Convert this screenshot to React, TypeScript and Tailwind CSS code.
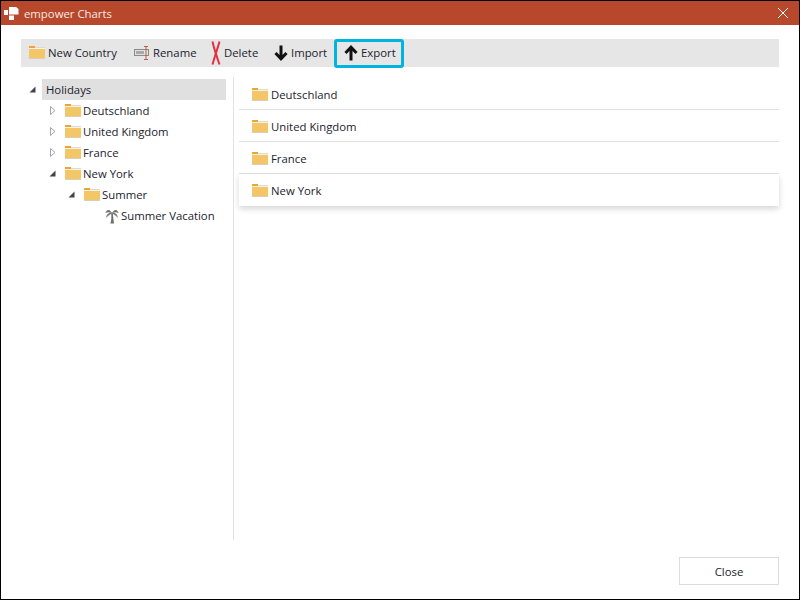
import React from 'react';

const FONT = "font-['Open_Sans','Liberation_Sans',sans-serif]";

const Folder = () => (
  <svg width="16" height="13" viewBox="0 0 16 13" className="shrink-0">
    <rect x="0" y="0" width="6" height="2" fill="#eda33a" />
    <rect x="6" y="1" width="10" height="1" fill="#dcdad4" />
    <rect x="0" y="2" width="16" height="1" fill="#fbf3e0" />
    <rect x="0" y="3" width="16" height="10" fill="#f3c768" />
    <rect x="0" y="12" width="16" height="1" fill="#d9cfb4" />
  </svg>
);

const Rename = () => (
  <svg width="17" height="14" viewBox="0 0 17 14" className="shrink-0">
    <rect x="0.5" y="3.5" width="14" height="6" fill="#e2e2e2" stroke="#8a8a8a" />
    <rect x="2" y="5" width="8" height="3" fill="#a8a8a8" />
    <path d="M10 0.5 H14 M12 0.5 V13.5 M10 13.5 H14" stroke="#b5604a" strokeWidth="1" fill="none" />
  </svg>
);

const RedX = () => (
  <svg width="10" height="24" viewBox="0 0 10 24" className="shrink-0">
    <path d="M1.5 0.5 C3 8 6 16 8.5 23.5" stroke="#e5303c" strokeWidth="2" fill="none" />
    <path d="M8.5 0.5 C6.5 8 3.5 16 1.5 23.5" stroke="#e5303c" strokeWidth="2" fill="none" />
  </svg>
);

const Arrow = ({ up }: { up?: boolean }) => (
  <svg width="14" height="16" viewBox="0 0 14 16" className="shrink-0">
    <path
      d={up ? 'M7 15.5 V2.5 M1.5 8 L7 2.2 L12.5 8' : 'M7 0.5 V13.5 M1.5 8 L7 13.8 L12.5 8'}
      stroke="#111"
      strokeWidth="3"
      fill="none"
    />
  </svg>
);

const Palm = () => (
  <svg width="14" height="16" viewBox="0 0 14 16" className="shrink-0">
    <path d="M6.2 5 C6.6 9 6.4 12 5.4 15.5 H9 C8.6 12 8 8 7.8 5 Z" fill="#6f6f6f" />
    <path d="M7 5.5 C5 0.5 2 1 0.3 5 C3 3.6 5 4 7 5.5 Z M7 5.5 C9 0.5 12 1 13.7 5 C11 3.6 9 4 7 5.5 Z" fill="#6f6f6f" />
    <path d="M7 4.5 C3.5 4 1.5 6.5 1 10 C3 7.5 5 6.5 7 5.5 Z M7 4.5 C10.5 4 12.5 6.5 13 10 C11 7.5 9 6.5 7 5.5 Z" fill="#7d7d7d" />
  </svg>
);

const Caret = ({ open }: { open: boolean }) =>
  open ? (
    <svg width="7" height="7" viewBox="0 0 7 7" className="shrink-0">
      <path d="M6.5 0.5 V6.5 H0.5 Z" fill="#444" />
    </svg>
  ) : (
    <svg width="6" height="9" viewBox="0 0 6 9" className="shrink-0">
      <path d="M0.5 0.5 L5 4.5 L0.5 8.5 Z" fill="#fff" stroke="#a6a6a6" />
    </svg>
  );

const treeRows = [
  { label: 'Deutschland', pad: 'pl-[29px]', caretW: 'w-[15px]', open: false },
  { label: 'United Kingdom', pad: 'pl-[29px]', caretW: 'w-[15px]', open: false },
  { label: 'France', pad: 'pl-[29px]', caretW: 'w-[15px]', open: false },
  { label: 'New York', pad: 'pl-[28px]', caretW: 'w-[16px]', open: true },
  { label: 'Summer', pad: 'pl-[47px]', caretW: 'w-[16px]', open: true },
];

const listRows = ['Deutschland', 'United Kingdom', 'France'];

export default function App() {
  return (
    <div className={`w-[800px] h-[600px] bg-white border border-black flex flex-col text-[11.35px] text-[#1c1c2e] ${FONT}`}>
      <div className="h-6 bg-[#b7482b] flex items-center text-white shrink-0">
        <svg width="16" height="16" viewBox="0 0 16 16" className="ml-[3px] shrink-0">
          <path d="M5 2 H12 L14.5 4 V9.5 H5 Z" fill="#fff" />
          <rect x="0" y="5" width="4" height="5" fill="#fff" />
          <rect x="5" y="10.5" width="5" height="4.5" fill="#fff" />
        </svg>
        <span className="ml-1 pt-[2px] text-[#f8e9e4]">empower Charts</span>
        <svg width="12" height="12" viewBox="0 0 12 12" className="ml-auto mr-[10px]">
          <path d="M1 1 L11 11 M11 1 L1 11" stroke="#fff" strokeWidth="1" />
        </svg>
      </div>

      <div className="flex-1 flex flex-col pt-[14px] px-5 pb-[14px] min-h-0">
        <div className="h-7 bg-[#e6e6e6] flex items-center shrink-0 pl-2">
          <div className="flex items-center gap-[3px]"><Folder /><span className="w-[70px]">New Country</span></div>
          <div className="flex items-center gap-[2px] ml-[16px]"><Rename /><span className="w-[43px]">Rename</span></div>
          <div className="flex items-center gap-[3px] ml-[15px]"><RedX /><span className="w-[33px]">Delete</span></div>
          <div className="flex items-center gap-[3px] ml-[17px]"><Arrow /><span className="w-[36px]">Import</span></div>
          <div className="flex items-center gap-[3px] ml-[7px] w-[70px] h-[29px] pl-[7px] border-[3px] border-[#00b4e0] rounded-[3px]"><Arrow up /><span>Export</span></div>
        </div>

        <div className="flex mt-[10px] h-[463px] shrink-0">
          <div className="w-[213px] border-r border-[#e2e2e2] shrink-0 pt-[2px]">
            <div className="flex items-center h-[21px]">
              <div className="w-[21px] pl-[8px] shrink-0"><Caret open /></div>
              <div className="w-[184px] h-[21px] bg-[#e0e0e0] flex items-center pl-1 pt-px">Holidays</div>
            </div>
            {treeRows.map(r => (
              <div key={r.label} className={`flex items-center h-[21px] ${r.pad}`}>
                <div className={`${r.caretW} shrink-0`}><Caret open={r.open} /></div>
                <Folder />
                <span className="ml-[2px]">{r.label}</span>
              </div>
            ))}
            <div className="flex items-center h-[21px] pl-[84px] gap-[2px]">
              <Palm />
              <span>Summer Vacation</span>
            </div>
          </div>

          <div className="flex-1 pl-[5px] pt-px">
            {listRows.map(l => (
              <div key={l} className="h-8 border-b border-[#e2e2e2] flex items-center pl-[13px] pt-[2px] gap-[3px]">
                <Folder />
                <span>{l}</span>
              </div>
            ))}
            <div className="h-8 flex items-center pl-[13px] pt-px gap-[3px] shadow-[0_3px_6px_rgba(0,0,0,0.16)]">
              <Folder />
              <span>New York</span>
            </div>
          </div>
        </div>

        <div className="mt-auto flex justify-end">
          <button className="w-[100px] h-7 border border-[#dcdcdc] bg-white pt-[2px]">Close</button>
        </div>
      </div>
    </div>
  );
}
